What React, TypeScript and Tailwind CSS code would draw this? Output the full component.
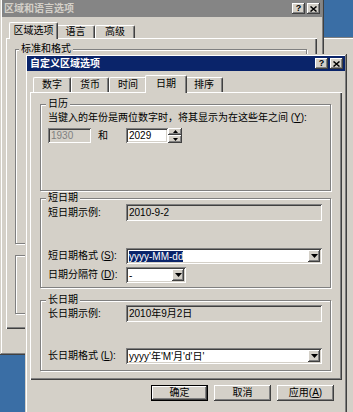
import React from "react";

const FACE = "bg-[#d4d0c8]";
const RAISED_WIN =
  "shadow-[inset_-1px_-1px_0_#404040,inset_1px_1px_0_#d4d0c8,inset_-2px_-2px_0_#808080,inset_2px_2px_0_#ffffff]";
const RAISED_BTN =
  "shadow-[inset_-1px_-1px_0_#404040,inset_1px_1px_0_#ffffff,inset_-2px_-2px_0_#808080,inset_2px_2px_0_#d4d0c8]";
const SUNKEN =
  "shadow-[inset_1px_1px_0_#808080,inset_-1px_-1px_0_#ffffff,inset_2px_2px_0_#404040,inset_-2px_-2px_0_#d4d0c8]";
const PANEL =
  "shadow-[inset_1px_1px_0_#ffffff,inset_-1px_-1px_0_#404040,inset_-2px_-2px_0_#808080]";
const GROUP =
  "border border-[#808080] shadow-[inset_1px_1px_0_#ffffff,1px_1px_0_#ffffff]";

function XGlyph() {
  return (
    <svg width="7" height="6" viewBox="0 0 7 6">
      <path d="M0.5 0.5 L6.5 5.5 M6.5 0.5 L0.5 5.5" stroke="#000" strokeWidth="1.5" />
    </svg>
  );
}

function TitleBtns() {
  return (
    <div className="flex gap-[2px]">
      <div
        className={`flex h-[11px] w-[13px] items-center justify-center ${FACE} ${RAISED_BTN} text-[9px] font-bold leading-none text-black`}
      >
        ?
      </div>
      <div className={`flex h-[11px] w-[13px] items-center justify-center ${FACE} ${RAISED_BTN}`}>
        <XGlyph />
      </div>
    </div>
  );
}

function Tab({ label, selected, w }: { label: string; selected?: boolean; w: string }) {
  if (selected) {
    return (
      <div
        className={`relative z-10 -mx-[2px] flex h-[18px] items-start justify-center rounded-t-[2px] border-l border-t border-white border-r border-r-[#404040] pt-[2px] shadow-[inset_-1px_0_0_#808080] ${FACE} ${w}`}
      >
        {label}
      </div>
    );
  }
  return (
    <div
      className={`mt-[2px] flex h-[15px] items-center justify-center rounded-t-[2px] border-l border-t border-white border-r border-r-[#404040] shadow-[inset_-1px_0_0_#808080] ${FACE} ${w}`}
    >
      {label}
    </div>
  );
}

function Legend({ children, left }: { children: React.ReactNode; left: string }) {
  return (
    <span className={`absolute top-[-7px] ${left} ${FACE} px-[2px] leading-[12px]`}>{children}</span>
  );
}

function DropBtn() {
  return (
    <div className={`flex w-[12px] items-center justify-center ${FACE} ${RAISED_BTN}`}>
      <svg width="7" height="4" viewBox="0 0 7 4">
        <path d="M0 0 H7 L3.5 4 Z" fill="#000" />
      </svg>
    </div>
  );
}

function Combo({
  value,
  selected,
  className,
}: {
  value: string;
  selected?: boolean;
  className: string;
}) {
  return (
    <div className={`flex h-[16px] items-stretch bg-white p-[2px] ${SUNKEN} ${className}`}>
      <div className="flex flex-1 items-center overflow-hidden whitespace-nowrap pl-[1px]">
        {selected ? (
          <span className="bg-[#0a246a] leading-[11px] text-white">{value}</span>
        ) : (
          <span className="leading-[11px]">{value}</span>
        )}
      </div>
      <DropBtn />
    </div>
  );
}

function ReadField({ value }: { value: string }) {
  return (
    <div className={`flex h-[17px] flex-1 items-center pl-[3px] ${FACE} ${SUNKEN}`}>{value}</div>
  );
}

function Label({ children }: { children: React.ReactNode }) {
  return <div className="w-[78px] shrink-0 whitespace-nowrap">{children}</div>;
}

function PushButton({ children, def }: { children: React.ReactNode; def?: boolean }) {
  if (def) {
    return (
      <div className="h-[16px] w-[57px] border border-black">
        <div
          className={`flex h-full w-full items-center justify-center ${FACE} shadow-[inset_-1px_-1px_0_#404040,inset_1px_1px_0_#ffffff,inset_-2px_-2px_0_#808080]`}
        >
          {children}
        </div>
      </div>
    );
  }
  return (
    <div className={`flex h-[16px] w-[57px] items-center justify-center ${FACE} ${RAISED_BTN}`}>
      {children}
    </div>
  );
}

function BackDialog() {
  return (
    <div
      className={`absolute left-0 top-[-2px] flex h-[357px] w-[324px] flex-col p-[2px] ${FACE} ${RAISED_WIN}`}
    >
      <div className="flex h-[17px] shrink-0 items-center justify-between bg-[#858585] pl-[2px] pr-[2px]">
        <span className="font-bold text-[#d4d0c8]">区域和语言选项</span>
        <TitleBtns />
      </div>
      <div className="mt-[5px] flex h-[16px] shrink-0 pl-[9px]">
        <div className="relative z-10 -mx-[2px] flex h-[17px] w-[49px] items-start justify-center rounded-t-[2px] border-l border-t border-white border-r border-r-[#404040] bg-[#d4d0c8] pt-[2px] shadow-[inset_-1px_0_0_#808080]">
          区域选项
        </div>
        <div className="mt-[3px] flex h-[13px] w-[39px] items-center justify-center rounded-t-[2px] border-l border-t border-white border-r border-r-[#404040] bg-[#d4d0c8] shadow-[inset_-1px_0_0_#808080]">
          语言
        </div>
        <div className="mt-[3px] flex h-[13px] w-[40px] items-center justify-center rounded-t-[2px] border-l border-t border-white border-r border-r-[#404040] bg-[#d4d0c8] shadow-[inset_-1px_0_0_#808080]">
          高级
        </div>
      </div>
      <div className={`ml-[4px] h-[291px] w-[311px] shrink-0 pl-[9px] pt-[11px] ${PANEL}`}>
        <div className={`relative h-[195px] w-[292px] ${GROUP}`}>
          <Legend left="left-[3px]">标准和格式</Legend>
        </div>
        <div className={`mt-[11px] h-[59px] w-[292px] ${GROUP}`} />
      </div>
    </div>
  );
}

function FrontDialog() {
  return (
    <div
      className={`absolute left-[25px] top-[54px] flex h-[360px] w-[322px] flex-col p-[2px] ${FACE} ${RAISED_WIN}`}
    >
      <div className="flex h-[15px] shrink-0 items-center justify-between bg-[#0a246a] pl-[3px] pr-[2px]">
        <span className="font-bold text-white">自定义区域选项</span>
        <TitleBtns />
      </div>
      <div className="mt-[4px] flex h-[17px] shrink-0 pl-[6px]">
        <Tab label="数字" w="w-[38px]" />
        <Tab label="货币" w="w-[38px]" />
        <Tab label="时间" w="w-[38px]" />
        <Tab label="日期" w="w-[42px]" selected />
        <Tab label="排序" w="w-[38px]" />
      </div>
      <div className={`ml-[3px] mr-[3px] h-[288px] shrink-0 pl-[10px] pr-[11px] pt-[12px] ${PANEL}`}>
        {/* 日历 */}
        <div className={`relative h-[87px] pl-[7px] pt-[7px] ${GROUP}`}>
          <Legend left="left-[5px]">日历</Legend>
          <div className="leading-[12px]">
            当键入的年份是两位数字时，将其显示为在这些年之间 (<span className="underline">Y</span>):
          </div>
          <div className="mt-[4px] flex h-[15px] items-stretch">
            <div className={`flex w-[43px] items-center pl-[3px] text-[#808080] ${FACE} ${SUNKEN}`}>
              1930
            </div>
            <div className="flex w-[35px] items-center pl-[7px]">和</div>
            <div className={`flex w-[42px] items-center bg-white pl-[3px] ${SUNKEN}`}>2029</div>
            <div className="flex w-[14px] flex-col">
              <div className={`flex h-[7px] items-center justify-center ${FACE} ${RAISED_BTN}`}>
                <svg width="5" height="3" viewBox="0 0 5 3">
                  <path d="M2.5 0 L5 3 H0 Z" fill="#000" />
                </svg>
              </div>
              <div className={`flex h-[8px] items-center justify-center ${FACE} ${RAISED_BTN}`}>
                <svg width="5" height="3" viewBox="0 0 5 3">
                  <path d="M0 0 H5 L2.5 3 Z" fill="#000" />
                </svg>
              </div>
            </div>
          </div>
        </div>

        {/* 短日期 */}
        <div className={`relative mt-[7px] h-[90px] pl-[7px] pr-[8px] pt-[5px] ${GROUP}`}>
          <Legend left="left-[5px]">短日期</Legend>
          <div className="flex items-center">
            <Label>短日期示例:</Label>
            <ReadField value="2010-9-2" />
          </div>
          <div className="mt-[27px] flex items-center">
            <Label>
              短日期格式 (<span className="underline">S</span>):
            </Label>
            <Combo value="yyyy-MM-dd" selected className="flex-1" />
          </div>
          <div className="mt-[3px] flex items-center">
            <Label>
              日期分隔符 (<span className="underline">D</span>):
            </Label>
            <Combo value="-" className="w-[60px]" />
          </div>
        </div>

        {/* 长日期 */}
        <div className={`relative mt-[12px] h-[71px] pl-[7px] pr-[8px] pt-[4px] ${GROUP}`}>
          <Legend left="left-[5px]">长日期</Legend>
          <div className="flex items-center">
            <Label>长日期示例:</Label>
            <ReadField value="2010年9月2日" />
          </div>
          <div className="mt-[26px] flex items-center">
            <Label>
              长日期格式 (<span className="underline">L</span>):
            </Label>
            <Combo value="yyyy'年'M'月'd'日'" className="flex-1" />
          </div>
        </div>
      </div>
      <div className="mt-[5px] flex shrink-0 justify-end gap-[6px] pr-[11px]">
        <PushButton def>确定</PushButton>
        <PushButton>取消</PushButton>
        <PushButton>
          应用(<span className="underline">A</span>)
        </PushButton>
      </div>
    </div>
  );
}

export default function App() {
  return (
    <div className="relative h-[412px] w-[353px] overflow-hidden bg-[#3a6ea5] font-['Liberation_Sans','Noto_Sans_CJK_SC',sans-serif] text-[10px] leading-[12px] text-black">
      <div className="absolute left-[318px] top-[37px] h-[380px] w-[40px] border-t border-[#808080] bg-[#d4d0c8] shadow-[inset_0_1px_0_#ffffff]" />
      <BackDialog />
      <FrontDialog />
    </div>
  );
}
